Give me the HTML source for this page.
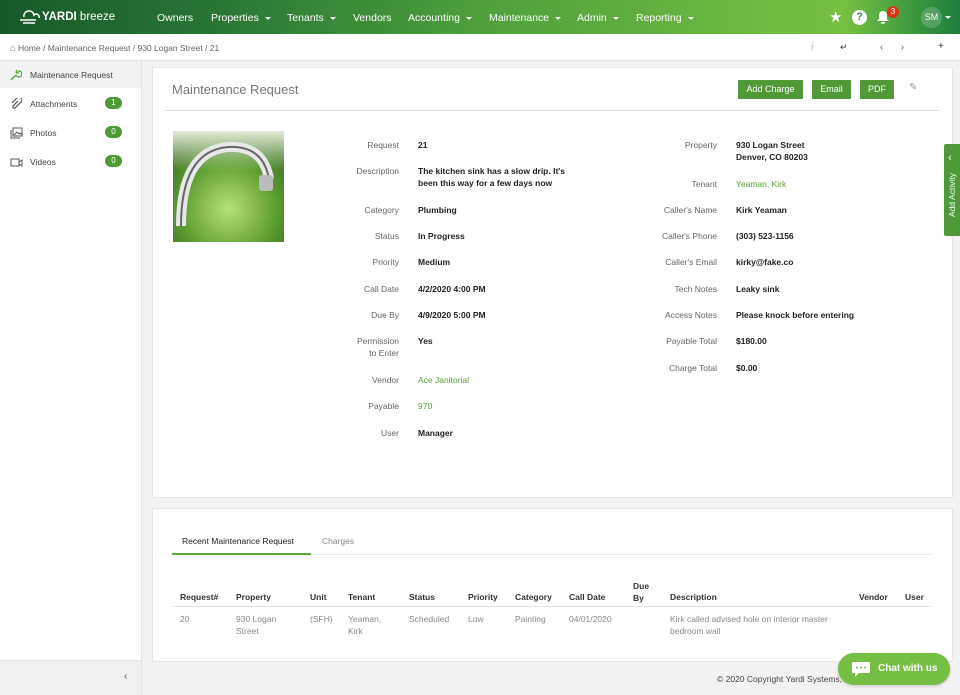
<!DOCTYPE html>
<html><head><meta charset="utf-8"><style>
*{box-sizing:border-box;margin:0;padding:0}
body{width:960px;height:695px;overflow:hidden;font-family:"Liberation Sans",sans-serif;background:#f3f3f3;position:relative;color:#333;font-size:9px}
.hdr{position:absolute;left:0;top:0;width:960px;height:34px;background:linear-gradient(90deg,#17592c 0%,#2c7a35 25%,#4ea03c 50%,#76c043 88%,#3d9a3e 95%,#1f7e3c 100%)}
.hdr .nav{position:absolute;top:12px;color:#fff;font-size:10.5px;white-space:nowrap}
.car{display:inline-block;border-left:3px solid transparent;border-right:3px solid transparent;border-top:3px solid #fff;vertical-align:middle;margin-left:6px}
.bc{position:absolute;left:0;top:34px;width:960px;height:27px;background:#fff;border-bottom:1px solid #e3e3e3}
.side{position:absolute;left:0;top:61px;width:142px;height:634px;background:#fff;border-right:1px solid #e3e3e3}
.si{position:absolute;left:0;width:141px;height:27px;font-size:8.5px;color:#444}
.si span{position:absolute;left:30px;top:9px}
.si svg{position:absolute;left:10px;top:8px}
.badge{position:absolute;left:105px;top:7px;width:17px;height:12px;border-radius:6px;background:#4f9a36;color:#fff;font-size:8px;text-align:center;line-height:12px}
.card{position:absolute;background:#fff;border:1px solid #e5e5e5}
.lb{position:absolute;color:#666;font-size:8.5px;text-align:right;width:120px;line-height:12px}
.vl{position:absolute;color:#222;font-size:8.5px;font-weight:bold;line-height:12px}
.g{color:#5a9e3a;font-weight:normal}
.btn{position:absolute;top:80px;height:19px;background:#4f9a36;color:#fff;font-size:9px;text-align:center;line-height:19px;border-radius:1px}
.th{position:absolute;top:592px;font-size:8.5px;color:#333;font-weight:bold}
.td{position:absolute;top:613px;font-size:8.5px;color:#888;line-height:12px}
</style></head><body>
<div class="hdr">
 <svg style="position:absolute;left:18px;top:10px" width="24" height="14" viewBox="0 0 24 14"><path d="M6 7a5 5 0 0 1 10 -2a3 3 0 0 1 5 3M2 10h16M5 13h12" stroke="#fff" stroke-width="1.5" fill="none"/></svg>
 <div class="nav" style="left:42px;top:11px;font-size:11.5px;font-weight:bold">YARDI <span style="font-weight:normal">breeze</span></div>
 <div class="nav" style="left:157px">Owners</div>
 <div class="nav" style="left:211px">Properties<i class="car"></i></div>
 <div class="nav" style="left:287px">Tenants<i class="car"></i></div>
 <div class="nav" style="left:353px">Vendors</div>
 <div class="nav" style="left:408px">Accounting<i class="car"></i></div>
 <div class="nav" style="left:489px">Maintenance<i class="car"></i></div>
 <div class="nav" style="left:577px">Admin<i class="car"></i></div>
 <div class="nav" style="left:636px">Reporting<i class="car"></i></div>
 <div class="nav" style="left:829px;top:8px;font-size:15px">★</div>
 <div style="position:absolute;left:852px;top:10px;width:15px;height:15px;border-radius:50%;background:#fff;color:#3a8f3a;font-weight:bold;font-size:11px;text-align:center;line-height:15px">?</div>
 <svg style="position:absolute;left:876px;top:10px" width="14" height="15" viewBox="0 0 14 15"><path d="M7 1a4 4 0 0 0 -4 4v4l-2 2h12l-2 -2v-4a4 4 0 0 0 -4 -4zM5 12a2 2 0 0 0 4 0z" fill="#fff"/></svg>
 <div style="position:absolute;left:887px;top:6px;width:12px;height:12px;border-radius:50%;background:#d31;color:#fff;font-size:8px;text-align:center;line-height:12px">3</div>
 <div style="position:absolute;left:921px;top:7px;width:21px;height:21px;border-radius:50%;background:rgba(255,255,255,.18);color:#fff;font-size:9px;text-align:center;line-height:21px">SM</div>
 <i class="car" style="position:absolute;left:945px;top:16px;margin:0"></i>
</div>
<div class="bc">
 <div style="position:absolute;left:10px;top:9px;font-size:9px;color:#777">⌂ <span style="color:#666;font-size:8.5px">Home / Maintenance Request / 930 Logan Street / 21</span></div>
 <div style="position:absolute;left:811px;top:7px;color:#bbb;font-size:11px">i</div>
 <div style="position:absolute;left:840px;top:8px;color:#333;font-size:9px">↵</div>
 <div style="position:absolute;left:880px;top:8px;color:#555;font-size:9px">‹</div>
 <div style="position:absolute;left:901px;top:8px;color:#555;font-size:9px">›</div>
 <div style="position:absolute;left:938px;top:7px;color:#333;font-size:10px">+</div>
</div>
<div class="side">
 <div class="si" style="top:0;background:#f3f3f3"><svg width="12" height="12" viewBox="0 0 12 12"><path d="M1 11l5 -5M6 6a3 3 0 1 0 3 -4l-1 2h-1l-1 -1l1 -2" stroke="#5a9e3a" stroke-width="1.3" fill="none"/></svg><span>Maintenance Request</span></div>
 <div class="si" style="top:29px"><svg width="12" height="12" viewBox="0 0 12 12"><path d="M8 3l-5 5a1.5 1.5 0 0 0 2 2l6 -6a2.5 2.5 0 0 0 -4 -4l-5 5" stroke="#555" stroke-width="1.2" fill="none"/></svg><span>Attachments</span><div class="badge">1</div></div>
 <div class="si" style="top:58px"><svg width="13" height="12" viewBox="0 0 13 12"><rect x="3" y="1" width="9" height="8" stroke="#555" fill="none"/><path d="M1 3v8h9" stroke="#555" fill="none"/><path d="M4 8l3 -3l2 2l1 -1l2 2" stroke="#555" fill="none"/></svg><span>Photos</span><div class="badge">0</div></div>
 <div class="si" style="top:87px"><svg width="13" height="12" viewBox="0 0 13 12"><rect x="1" y="3" width="8" height="7" stroke="#555" fill="none"/><path d="M9 6l3 -2v6l-3 -2" stroke="#555" fill="none"/></svg><span>Videos</span><div class="badge">0</div></div>
 <div style="position:absolute;left:0;top:599px;width:141px;height:35px;background:#f0f0f0;border-top:1px solid #e3e3e3"><span style="position:absolute;left:124px;top:10px;font-size:10px;color:#555">‹</span></div>
</div>
<div class="card" style="left:152px;top:67px;width:801px;height:431px"></div>
<div style="position:absolute;left:172px;top:82px;font-size:13px;color:#777">Maintenance Request</div>
<div style="position:absolute;left:164px;top:110px;width:776px;height:1px;background:#e3e3e3"></div>
<div class="btn" style="left:738px;width:65px">Add Charge</div>
<div class="btn" style="left:812px;width:39px">Email</div>
<div class="btn" style="left:860px;width:34px">PDF</div>
<div style="position:absolute;left:909px;top:82px;color:#999;font-size:10px">✎</div>
<svg style="position:absolute;left:173px;top:131px" width="111" height="111" viewBox="0 0 111 111">
 <defs><radialGradient id="r" cx=".5" cy=".7" r=".7"><stop offset="0" stop-color="#b8e07a"/><stop offset=".6" stop-color="#5e9f32"/><stop offset="1" stop-color="#3a6c20"/></radialGradient>
 <linearGradient id="t" x1="0" y1="0" x2="0" y2="1"><stop offset="0" stop-color="#e4ecd8"/><stop offset="1" stop-color="#e4ecd8" stop-opacity="0"/></linearGradient></defs>
 <rect width="111" height="111" fill="url(#r)"/>
 <rect x="0" y="0" width="111" height="40" fill="url(#t)"/>
 <path d="M8 95 Q8 20 55 16 Q90 14 96 48" stroke="#e8e8e8" stroke-width="10" fill="none"/>
 <path d="M8 95 Q8 20 55 16 Q90 14 96 48" stroke="#666" stroke-width="2" fill="none"/>
 <rect x="86" y="44" width="14" height="16" rx="3" fill="#bbb"/>
</svg>
<div class="lb" style="left:279px;top:139px">Request</div><div class="vl" style="left:418px;top:139px">21</div>
<div class="lb" style="left:279px;top:165px">Description</div><div class="vl" style="left:418px;top:165px">The kitchen sink has a slow drip. It's<br>been this way for a few days now</div>
<div class="lb" style="left:279px;top:204px">Category</div><div class="vl" style="left:418px;top:204px">Plumbing</div>
<div class="lb" style="left:279px;top:230px">Status</div><div class="vl" style="left:418px;top:230px">In Progress</div>
<div class="lb" style="left:279px;top:256px">Priority</div><div class="vl" style="left:418px;top:256px">Medium</div>
<div class="lb" style="left:279px;top:283px">Call Date</div><div class="vl" style="left:418px;top:283px">4/2/2020 4:00 PM</div>
<div class="lb" style="left:279px;top:309px">Due By</div><div class="vl" style="left:418px;top:309px">4/9/2020 5:00 PM</div>
<div class="lb" style="left:279px;top:335px">Permission<br>to Enter</div><div class="vl" style="left:418px;top:335px">Yes</div>
<div class="lb" style="left:279px;top:374px">Vendor</div><div class="vl g" style="left:418px;top:374px">Ace Janitorial</div>
<div class="lb" style="left:279px;top:400px">Payable</div><div class="vl g" style="left:418px;top:400px">970</div>
<div class="lb" style="left:279px;top:427px">User</div><div class="vl" style="left:418px;top:427px">Manager</div>
<div class="lb" style="left:597px;top:139px">Property</div><div class="vl" style="left:736px;top:139px">930 Logan Street<br>Denver, CO 80203</div>
<div class="lb" style="left:597px;top:178px">Tenant</div><div class="vl g" style="left:736px;top:178px">Yeaman, Kirk</div>
<div class="lb" style="left:597px;top:204px">Caller's Name</div><div class="vl" style="left:736px;top:204px">Kirk Yeaman</div>
<div class="lb" style="left:597px;top:230px">Caller's Phone</div><div class="vl" style="left:736px;top:230px">(303) 523-1156</div>
<div class="lb" style="left:597px;top:256px">Caller's Email</div><div class="vl" style="left:736px;top:256px">kirky@fake.co</div>
<div class="lb" style="left:597px;top:283px">Tech Notes</div><div class="vl" style="left:736px;top:283px">Leaky sink</div>
<div class="lb" style="left:597px;top:309px">Access Notes</div><div class="vl" style="left:736px;top:309px">Please knock before entering</div>
<div class="lb" style="left:597px;top:335px">Payable Total</div><div class="vl" style="left:736px;top:335px">$180.00</div>
<div class="lb" style="left:597px;top:362px">Charge Total</div><div class="vl" style="left:736px;top:362px">$0.00</div>
<div style="position:absolute;left:944px;top:144px;width:16px;height:92px;background:#4f9a36;border-radius:2px 0 0 2px"></div>
<div style="position:absolute;left:948px;top:152px;color:#fff;font-size:11px">‹</div>
<div style="position:absolute;left:920px;top:190px;width:64px;transform:rotate(-90deg);color:#fff;font-size:8.5px;text-align:center;white-space:nowrap">Add Activity</div>
<div class="card" style="left:152px;top:508px;width:801px;height:154px"></div>
<div style="position:absolute;left:182px;top:536px;font-size:8.5px;color:#222">Recent Maintenance Request</div>
<div style="position:absolute;left:322px;top:536px;font-size:8.5px;color:#888">Charges</div>
<div style="position:absolute;left:172px;top:554px;width:760px;height:1px;background:#e8e8e8"></div>
<div style="position:absolute;left:172px;top:553px;width:139px;height:2px;background:#5aa83a"></div>
<div class="th" style="left:180px">Request#</div><div class="th" style="left:236px">Property</div><div class="th" style="left:310px">Unit</div><div class="th" style="left:348px">Tenant</div><div class="th" style="left:409px">Status</div><div class="th" style="left:468px">Priority</div><div class="th" style="left:515px">Category</div><div class="th" style="left:569px">Call Date</div><div class="th" style="left:633px;top:580px;line-height:12px">Due<br>By</div><div class="th" style="left:670px">Description</div><div class="th" style="left:859px">Vendor</div><div class="th" style="left:905px">User</div>
<div style="position:absolute;left:172px;top:606px;width:760px;height:1px;background:#e5e5e5"></div>
<div class="td" style="left:180px">20</div><div class="td" style="left:236px">930 Logan<br>Street</div><div class="td" style="left:310px">(SFH)</div><div class="td" style="left:348px">Yeaman,<br>Kirk</div><div class="td" style="left:409px">Scheduled</div><div class="td" style="left:468px">Low</div><div class="td" style="left:515px">Painting</div><div class="td" style="left:569px">04/01/2020</div><div class="td" style="left:670px">Kirk called advised hole on interior master<br>bedroom wall</div>
<div style="position:absolute;left:717px;top:674px;font-size:8.5px;color:#444">© 2020 Copyright Yardi Systems, Inc. All Rights Reserved.</div>
<div style="position:absolute;left:838px;top:653px;width:112px;height:32px;border-radius:16px;background:#76bf45;box-shadow:0 1px 3px rgba(0,0,0,.2)"></div>
<svg style="position:absolute;left:851px;top:661px" width="20" height="17" viewBox="0 0 20 17"><path d="M2 1h16a1 1 0 0 1 1 1v9a1 1 0 0 1 -1 1h-10l-4 4v-4h-2a1 1 0 0 1 -1 -1v-9a1 1 0 0 1 1 -1z" fill="#fff"/><circle cx="6" cy="6.5" r="1" fill="#76bf45"/><circle cx="10" cy="6.5" r="1" fill="#76bf45"/><circle cx="14" cy="6.5" r="1" fill="#76bf45"/></svg>
<div style="position:absolute;left:878px;top:663px;font-size:10px;color:#fff;font-weight:bold">Chat with us</div>
</body></html>
